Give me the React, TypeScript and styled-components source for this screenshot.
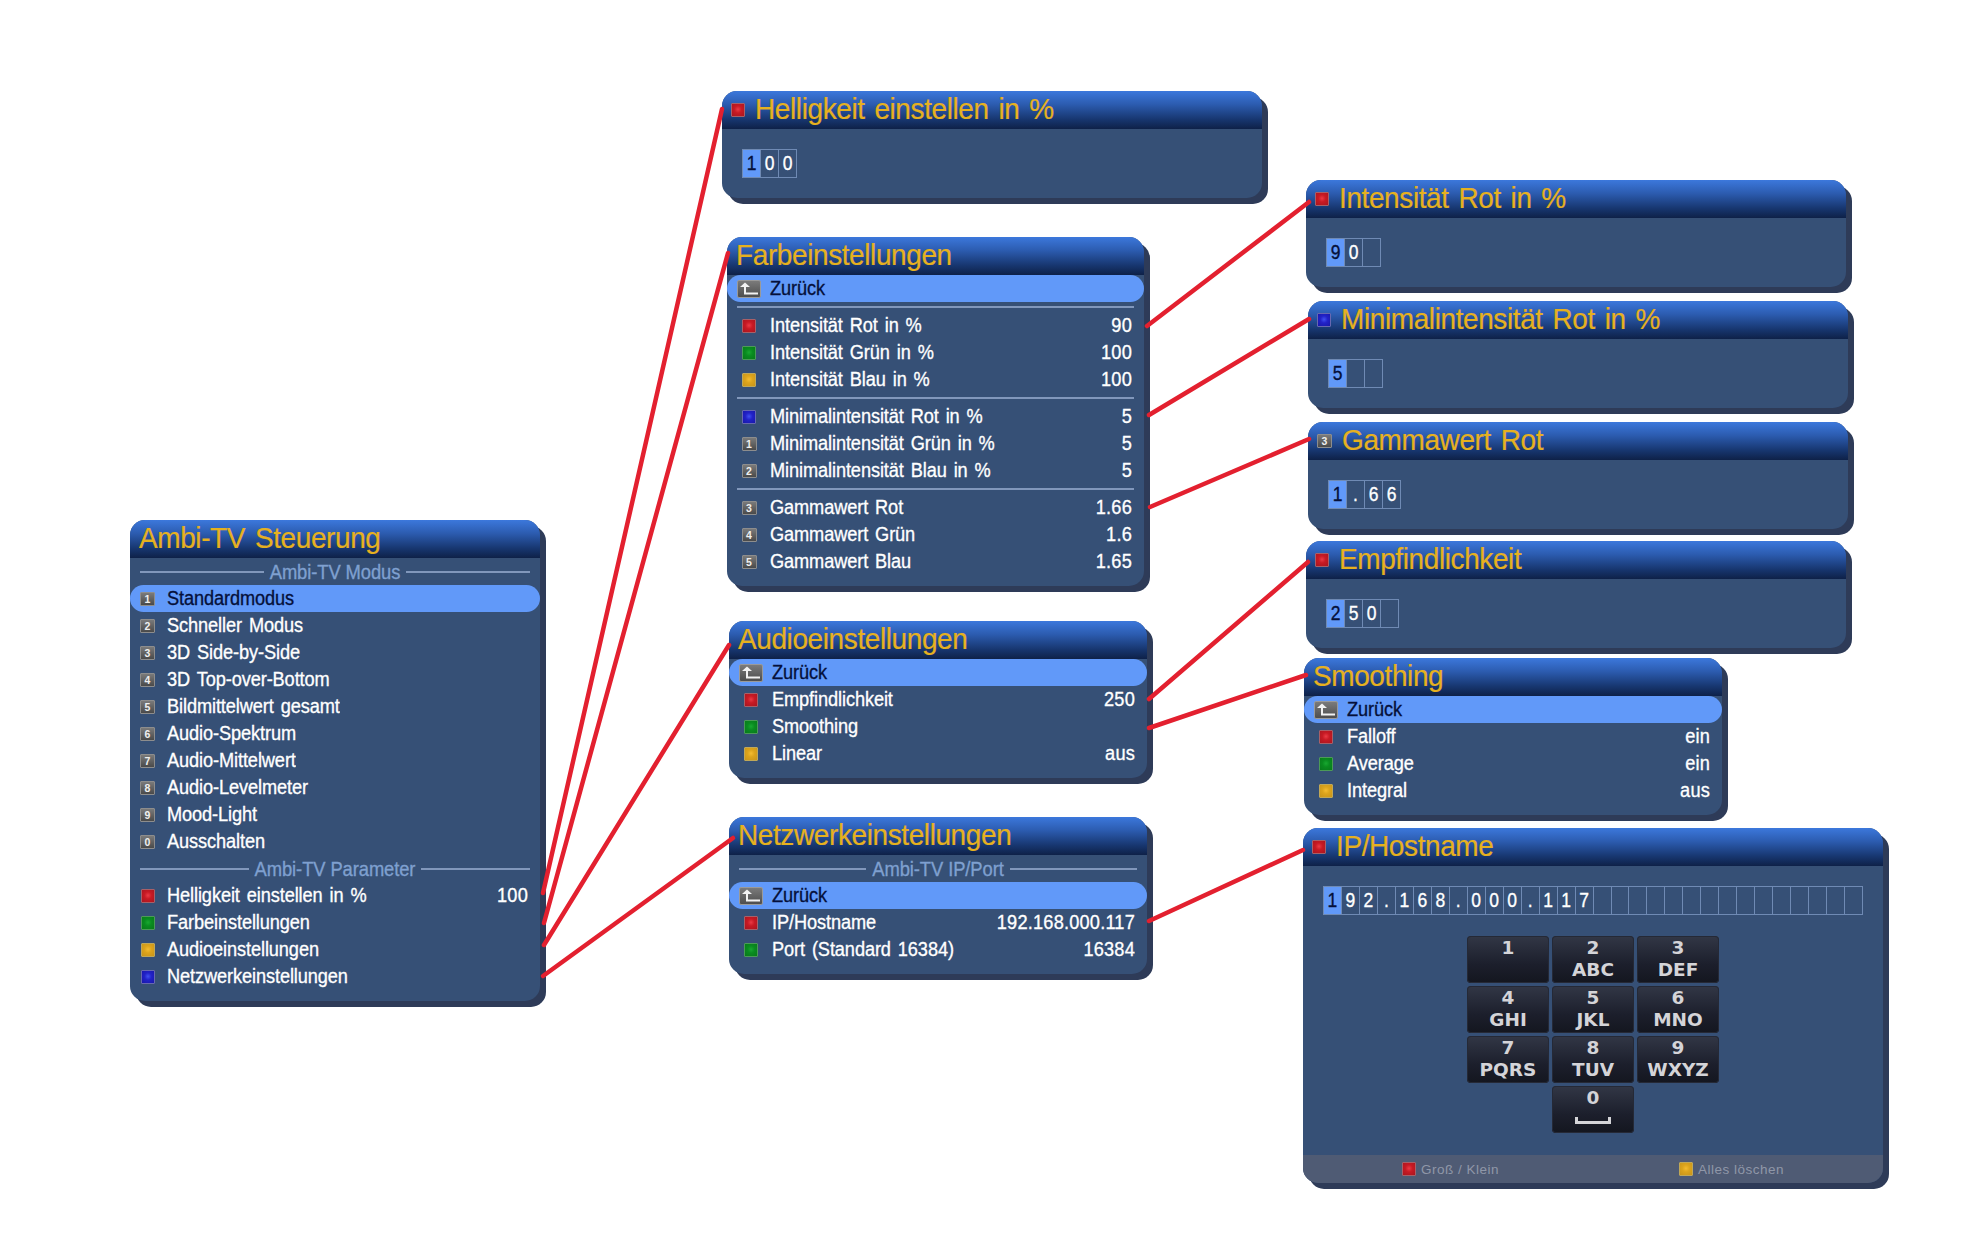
import React from "react";
import styled, { createGlobalStyle } from "styled-components";

const Global = createGlobalStyle`
  html, body { margin: 0; padding: 0; background: #fff; }
  body { font-family: "Liberation Sans", Arial, sans-serif; }
`;

const Stage = styled.div`
  position: relative;
  width: 1972px;
  height: 1236px;
  overflow: hidden;
  background: #fff;
`;

const Win = styled.section<{ $x: number; $y: number; $w: number }>`
  position: absolute;
  left: ${(p) => p.$x}px;
  top: ${(p) => p.$y}px;
  width: ${(p) => p.$w}px;
  background: #365076;
  border-radius: 15px;
  box-shadow: 6px 6px 0 0 #2e3b58;
  display: flex;
  flex-direction: column;
`;

const Header = styled.header`
  height: 38px;
  box-sizing: border-box;
  padding-left: 9px;
  display: flex;
  align-items: center;
  gap: 10px;
  border-radius: 15px 15px 0 0;
  background: linear-gradient(180deg, #3c78dc 0%, #2c5cb0 35%, #17366f 75%, #0e2148 100%);
`;

const Title = styled.h2`
  margin: 0;
  font-size: 28px;
  line-height: 38px;
  font-weight: 400;
  letter-spacing: -0.4px;
  word-spacing: 2.4px;
  color: #e6b11f;
  white-space: nowrap;
  transform: translateY(-1px) scaleY(1.08);
  -webkit-text-stroke: 0.2px currentColor;
`;

const List = styled.div`
  display: flex;
  flex-direction: column;
  padding-bottom: 11px;
`;

const Row = styled.div<{ $active?: boolean; $slot: number; $gap: number }>`
  height: 27px;
  box-sizing: border-box;
  padding: 0 12px 0 10px;
  display: grid;
  grid-template-columns: ${(p) => p.$slot}px 1fr auto;
  column-gap: ${(p) => p.$gap}px;
  align-items: center;
  border-radius: 14px;
  background: ${(p) => (p.$active ? "#6199f9" : "transparent")};
  color: ${(p) => (p.$active ? "#05103a" : "#fff")};
  font-size: 18.2px;
  letter-spacing: -0.1px;
  word-spacing: 2px;
  white-space: nowrap;
  -webkit-text-stroke: 0.3px currentColor;
`;

const Slot = styled.span`
  display: flex;
  justify-content: center;
  align-items: center;
`;

const RowText = styled.span`
  display: inline-block;
  transform: scaleY(1.1);
`;

const ValueText = styled(RowText)`
  letter-spacing: 0.2px;
`;

const Section = styled.div`
  height: 27px;
  padding: 0 10px;
  display: flex;
  align-items: center;
  gap: 6px;
  color: #7fa0d0;
  font-size: 18.4px;
  letter-spacing: -0.1px;
  white-space: nowrap;
  -webkit-text-stroke: 0.3px currentColor;
  &::before, &::after {
    content: "";
    flex: 1;
    height: 2px;
    background: #8197bb;
  }
`;

const Sep = styled.div`
  height: 10px;
  margin: 0 10px;
  display: flex;
  align-items: center;
  &::after {
    content: "";
    flex: 1;
    height: 2px;
    background: #8197bb;
  }
`;

const colours: Record<string, [string, string, string, string]> = {
  red: ["#ea3a44", "#c81a24", "#a81620", "#a86068"],
  green: ["#18a830", "#0a8c20", "#087a1a", "#4c9a58"],
  yellow: ["#f4bc30", "#dca41c", "#c8941a", "#c0a858"],
  blue: ["#4050f0", "#2222c8", "#1818a8", "#6868b0"],
};

const Dot = styled.span<{ $c: string }>`
  display: block;
  width: 14px;
  height: 14px;
  box-sizing: border-box;
  flex: none;
  border: 1px solid ${(p) => colours[p.$c][3]};
  border-radius: 1px;
  background: radial-gradient(circle at 50% 45%, ${(p) => colours[p.$c][0]} 0%, ${(p) => colours[p.$c][1]} 40%, ${(p) => colours[p.$c][2]} 100%);
`;

const NumKey = styled.span`
  display: flex;
  align-items: center;
  justify-content: center;
  width: 15px;
  height: 14px;
  box-sizing: border-box;
  flex: none;
  border: 1px solid #8d8d8d;
  border-radius: 1px;
  background: linear-gradient(180deg, #7a7a7a, #4a4a4a);
  color: #f0f0f0;
  font-size: 10.5px;
  font-weight: 700;
  letter-spacing: 0;
  -webkit-text-stroke: 0;
`;

const BackBox = styled.svg`
  display: block;
  width: 24px;
  height: 18px;
`;

const BackIcon = () => (
  <BackBox viewBox="0 0 24 18">
    <defs>
      <linearGradient id="backFill" x1="0" y1="0" x2="0" y2="1">
        <stop offset="0" stopColor="#7c7c7c" />
        <stop offset="1" stopColor="#4c4c4c" />
      </linearGradient>
    </defs>
    <rect x="0.5" y="0.5" width="23" height="17" rx="1.5" fill="url(#backFill)" stroke="#9a9a9a" />
    <path d="M3 7 L8 2.5 L13 7 Z" fill="#f2f2f2" />
    <path d="M8 6 V13.5 H21" fill="none" stroke="#f2f2f2" strokeWidth="2" />
  </BackBox>
);

const InputBody = styled.div<{ $flush?: boolean }>`
  padding: 20px 20px ${(p) => (p.$flush ? 0 : 20)}px;
  display: flex;
  flex-direction: column;
`;

const Cells = styled.div`
  display: flex;
  padding-left: 1px;
`;

const Cell = styled.span<{ $active?: boolean }>`
  width: 19px;
  height: 29px;
  margin-left: -1px;
  box-sizing: border-box;
  display: flex;
  align-items: center;
  justify-content: center;
  border: 1px solid #6f8ab4;
  background: ${(p) => (p.$active ? "#6199f9" : "transparent")};
  color: ${(p) => (p.$active ? "#05103a" : "#fff")};
  font-size: 17.5px;
  -webkit-text-stroke: 0.3px currentColor;
`;

const CellText = styled.span`
  display: inline-block;
  transform: scaleY(1.18);
`;

const Keypad = styled.div`
  margin: 21px auto 22px;
  display: grid;
  grid-template-columns: repeat(3, 82px);
  grid-auto-rows: 47px;
  gap: 3px;
`;

const Key = styled.div<{ $col?: number }>`
  ${(p) => (p.$col ? `grid-column: ${p.$col};` : "")}
  box-sizing: border-box;
  padding-top: 1px;
  border-radius: 4px;
  background: linear-gradient(180deg, #323746 0%, #1c1f2c 60%, #14161f 100%);
  box-shadow: inset 0 0 0 1px #252936;
  color: #d4d4d8;
  font-family: "DejaVu Sans", "Noto Sans", sans-serif;
  font-weight: 700;
  font-size: 18.5px;
  line-height: 22px;
  text-align: center;
  display: flex;
  flex-direction: column;
  align-items: center;
`;

const KeyGlyph = styled.span`
  display: block;
  height: 22px;
`;

const SpaceMark = styled.span`
  display: block;
  width: 36px;
  height: 7px;
  margin-top: 8px;
  box-sizing: border-box;
  border: 3px solid #d4d4d8;
  border-top: 0;
`;

const Footer = styled.footer`
  height: 28px;
  padding-left: 99px;
  display: grid;
  grid-template-columns: 277px 1fr;
  align-items: center;
  background: #4f5b74;
  border-radius: 0 0 15px 15px;
  color: #8f97a8;
  font-size: 13.5px;
  letter-spacing: 0.5px;
`;

const FooterItem = styled.span`
  display: flex;
  align-items: center;
  gap: 5px;
`;

const Wires = styled.svg`
  position: absolute;
  left: 0;
  top: 0;
  pointer-events: none;
`;

type Item = { icon?: string; num?: string; back?: boolean; label?: string; value?: string; section?: string; sep?: boolean };

const Menu = ({ x, y, w, title, items, main }: { x: number; y: number; w: number; title: string; items: Item[]; main?: boolean }) => (
  <Win $x={x} $y={y} $w={w}>
    <Header>
      <Title>{title}</Title>
    </Header>
    <List>
      {items.map((it, i) => {
        if (it.section) return <Section key={i}><RowText>{it.section}</RowText></Section>;
        if (it.sep) return <Sep key={i} />;
        return (
          <Row key={i} $active={it.back || it.label === "Standardmodus"} $slot={main ? 15 : 24} $gap={main ? 12 : 9}>
            <Slot>
              {it.back && <BackIcon />}
              {it.icon && <Dot $c={it.icon} />}
              {it.num && <NumKey>{it.num}</NumKey>}
            </Slot>
            <RowText>{it.label}</RowText>
            <ValueText>{it.value}</ValueText>
          </Row>
        );
      })}
    </List>
  </Win>
);

const keys: [string, string][] = [
  ["1", ""], ["2", "ABC"], ["3", "DEF"],
  ["4", "GHI"], ["5", "JKL"], ["6", "MNO"],
  ["7", "PQRS"], ["8", "TUV"], ["9", "WXYZ"],
  ["0", ""],
];

const Input = ({ x, y, w, title, chars, icon, num, keypad }: { x: number; y: number; w: number; title: string; chars: string[]; icon?: string; num?: string; keypad?: boolean }) => (
  <Win $x={x} $y={y} $w={w}>
    <Header>
      {icon && <Dot $c={icon} />}
      {num && <NumKey>{num}</NumKey>}
      <Title>{title}</Title>
    </Header>
    <InputBody $flush={keypad}>
      <Cells>
        {chars.map((c, i) => (
          <Cell key={i} $active={i === 0}><CellText>{c}</CellText></Cell>
        ))}
      </Cells>
      {keypad && (
        <Keypad>
          {keys.map(([d, l]) => (
            <Key key={d} $col={d === "0" ? 2 : undefined}>
              <KeyGlyph>{d}</KeyGlyph>
              {d === "0" ? <SpaceMark /> : <KeyGlyph>{l}</KeyGlyph>}
            </Key>
          ))}
        </Keypad>
      )}
    </InputBody>
    {keypad && (
      <Footer>
        <FooterItem><Dot $c="red" />Groß / Klein</FooterItem>
        <FooterItem><Dot $c="yellow" />Alles löschen</FooterItem>
      </Footer>
    )}
  </Win>
);

const mainItems: Item[] = [
  { section: "Ambi-TV Modus" },
  { num: "1", label: "Standardmodus" },
  { num: "2", label: "Schneller Modus" },
  { num: "3", label: "3D Side-by-Side" },
  { num: "4", label: "3D Top-over-Bottom" },
  { num: "5", label: "Bildmittelwert gesamt" },
  { num: "6", label: "Audio-Spektrum" },
  { num: "7", label: "Audio-Mittelwert" },
  { num: "8", label: "Audio-Levelmeter" },
  { num: "9", label: "Mood-Light" },
  { num: "0", label: "Ausschalten" },
  { section: "Ambi-TV Parameter" },
  { icon: "red", label: "Helligkeit einstellen in %", value: "100" },
  { icon: "green", label: "Farbeinstellungen" },
  { icon: "yellow", label: "Audioeinstellungen" },
  { icon: "blue", label: "Netzwerkeinstellungen" },
];

const farbItems: Item[] = [
  { back: true, label: "Zurück" },
  { sep: true },
  { icon: "red", label: "Intensität Rot in %", value: "90" },
  { icon: "green", label: "Intensität Grün in %", value: "100" },
  { icon: "yellow", label: "Intensität Blau in %", value: "100" },
  { sep: true },
  { icon: "blue", label: "Minimalintensität Rot in %", value: "5" },
  { num: "1", label: "Minimalintensität Grün in %", value: "5" },
  { num: "2", label: "Minimalintensität Blau in %", value: "5" },
  { sep: true },
  { num: "3", label: "Gammawert Rot", value: "1.66" },
  { num: "4", label: "Gammawert Grün", value: "1.6" },
  { num: "5", label: "Gammawert Blau", value: "1.65" },
];

const audioItems: Item[] = [
  { back: true, label: "Zurück" },
  { icon: "red", label: "Empfindlichkeit", value: "250" },
  { icon: "green", label: "Smoothing" },
  { icon: "yellow", label: "Linear", value: "aus" },
];

const netzItems: Item[] = [
  { section: "Ambi-TV IP/Port" },
  { back: true, label: "Zurück" },
  { icon: "red", label: "IP/Hostname", value: "192.168.000.117" },
  { icon: "green", label: "Port (Standard 16384)", value: "16384" },
];

const smoothItems: Item[] = [
  { back: true, label: "Zurück" },
  { icon: "red", label: "Falloff", value: "ein" },
  { icon: "green", label: "Average", value: "ein" },
  { icon: "yellow", label: "Integral", value: "aus" },
];

const wires: [number, number, number, number][] = [
  [543, 893, 722, 109],
  [544, 923, 728, 253],
  [544, 945, 729, 645],
  [543, 976, 733, 838],
  [1147, 326, 1309, 202],
  [1149, 415, 1309, 319],
  [1150, 507, 1309, 439],
  [1149, 699, 1308, 562],
  [1149, 728, 1306, 675],
  [1149, 921, 1303, 850],
];

const ipChars = "192.168.000.117".split("").concat(Array(15).fill(""));

export default function App() {
  return (
    <Stage>
      <Global />
      <Menu main x={130} y={520} w={410} title="Ambi-TV Steuerung" items={mainItems} />
      <Input x={722} y={91} w={540} title="Helligkeit einstellen in %" icon="red" chars={["1", "0", "0"]} />
      <Menu x={727} y={237} w={417} title="Farbeinstellungen" items={farbItems} />
      <Menu x={729} y={621} w={418} title="Audioeinstellungen" items={audioItems} />
      <Menu x={729} y={817} w={418} title="Netzwerkeinstellungen" items={netzItems} />
      <Input x={1306} y={180} w={540} title="Intensität Rot in %" icon="red" chars={["9", "0", ""]} />
      <Input x={1308} y={301} w={540} title="Minimalintensität Rot in %" icon="blue" chars={["5", "", ""]} />
      <Input x={1308} y={422} w={540} title="Gammawert Rot" num="3" chars={["1", ".", "6", "6"]} />
      <Input x={1306} y={541} w={540} title="Empfindlichkeit" icon="red" chars={["2", "5", "0", ""]} />
      <Menu x={1304} y={658} w={418} title="Smoothing" items={smoothItems} />
      <Input x={1303} y={828} w={580} title="IP/Hostname" icon="red" chars={ipChars} keypad />
      <Wires width="1972" height="1236" viewBox="0 0 1972 1236">
        {wires.map(([a, b, c, d], i) => (
          <line key={i} x1={a} y1={b} x2={c} y2={d} stroke="#e3202f" strokeWidth="4.5" strokeLinecap="round" />
        ))}
      </Wires>
    </Stage>
  );
}
